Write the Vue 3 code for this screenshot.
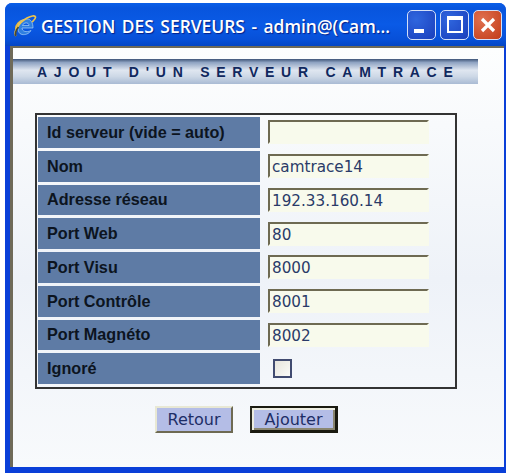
<template>
  <div class="window">
    <div class="titlebar">
      <svg class="ieIcon" width="24" height="24" viewBox="0 0 24 24">
        <path d="M3 15 A9 7 -25 0 1 11 6" fill="none" stroke="#e8b93c" stroke-width="2"/>
        <path d="M5 14 C5 8 10 5 14 5 C18 5 20 9 20 14 H9 C9 17 13 19 18 16.5 C16 20 12 21 9 20.5 C6 20 5 17 5 14 Z M9.5 11.5 H16 C16 8 10.5 8 9.5 11.5 Z" fill="#2f7fe0" fill-rule="evenodd" stroke="#bfe0fb" stroke-width="0.6"/>
        <path d="M3 22 C0 19 5 9 14 4 C18 2 22 1 22.5 3 C23 5 20 7 19 8" fill="none" stroke="#eec44c" stroke-width="1.7"/>
        <path d="M3 22 C1.5 20.5 3 16 5.5 13" fill="none" stroke="#4a4a30" stroke-width="1.7"/>
      </svg>
      <span class="titleText">GESTION DES SERVEURS - admin@(Cam...</span>
      <div class="winButtons">
        <div class="winBtn"><span class="minGlyph"></span></div>
        <div class="winBtn"><span class="maxGlyph"></span></div>
        <div class="winBtn closeBtn">
          <svg width="18" height="18" viewBox="0 0 18 18">
            <path d="M3 3 L15 15 M15 3 L3 15" stroke="#fff" stroke-width="3.2"/>
          </svg>
        </div>
      </div>
    </div>

    <div class="content">
      <h1 class="banner">AJOUT D'UN SERVEUR CAMTRACE</h1>

      <form class="serverForm" @submit.prevent>
        <div class="formTable">
          <template v-for="field in fields" :key="field.label">
            <label class="cellLabel">{{ field.label }}</label>
            <div class="cellValue">
              <input v-if="field.type === 'text'" class="textInput" type="text" :value="field.value" />
              <span v-else class="checkBox"></span>
            </div>
          </template>
        </div>

        <div class="actions">
          <button type="button" class="btn btnBack">Retour</button>
          <button type="submit" class="btn btnAdd">Ajouter</button>
        </div>
      </form>
    </div>
  </div>
</template>

<script setup>
const fields = [
  { label: 'Id serveur (vide = auto)', type: 'text', value: '' },
  { label: 'Nom', type: 'text', value: 'camtrace14' },
  { label: 'Adresse réseau', type: 'text', value: '192.33.160.14' },
  { label: 'Port Web', type: 'text', value: '80' },
  { label: 'Port Visu', type: 'text', value: '8000' },
  { label: 'Port Contrôle', type: 'text', value: '8001' },
  { label: 'Port Magnéto', type: 'text', value: '8002' },
  { label: 'Ignoré', type: 'check' }
]
</script>

<style>
html, body {
  margin: 0;
  background: #ffffff;
}
</style>

<style scoped>
.window {
  box-sizing: border-box;
  width: 501px;
  height: 470px;
  margin: 3px 0 0 5px;
  display: flex;
  flex-direction: column;
  border-radius: 7px 7px 0 0;
  background: #0a3fd8;
  overflow: hidden;
}

.titlebar {
  height: 43px;
  flex: none;
  display: flex;
  align-items: center;
  padding: 0 4px 0 8px;
  box-sizing: border-box;
  background: linear-gradient(to bottom, #0a5fe8 0%, #0855dd 12%, #0a5ae6 50%, #0750d8 85%, #0546c4 100%);
}

.ieIcon {
  flex: none;
  margin: 2px 4px 0 0;
}

.titleText {
  flex: 1;
  margin-top: 3px;
  font-family: "Open Sans", sans-serif;
  font-size: 17.4px;
  font-weight: 600;
  word-spacing: 2px;
  color: #ffffff;
  text-shadow: 1px 1px 1px #04208a;
  white-space: nowrap;
}

.winButtons {
  display: flex;
  gap: 4px;
}

.winBtn {
  box-sizing: border-box;
  width: 29px;
  height: 30px;
  border: 1px solid #d4e0f8;
  border-radius: 5px;
  background: radial-gradient(circle at 30% 30%, #2f66de, #1a3fbc);
  display: flex;
  align-items: center;
  justify-content: center;
  position: relative;
}

.minGlyph {
  position: absolute;
  left: 6px;
  bottom: 6px;
  width: 10px;
  height: 4px;
  background: #ffffff;
}

.maxGlyph {
  box-sizing: border-box;
  width: 16px;
  height: 17px;
  border: 2px solid #ffffff;
  border-top-width: 4px;
}

.closeBtn {
  background: radial-gradient(circle at 30% 30%, #e07050, #c23c18);
}

.content {
  flex: 1;
  margin: 0 2px 6px 5px;
  border-left: 3px solid #6f6a58;
  border-top: 2px solid #6f6a58;
  background: linear-gradient(to bottom, #fdfefe 0%, #eef2f8 55%, #f8fafc 100%);
  padding-top: 11px;
}

.banner {
  box-sizing: border-box;
  width: 465px;
  height: 25px;
  margin: 0;
  padding-left: 24px;
  font-family: "Liberation Sans", Arial, sans-serif;
  font-size: 14px;
  font-weight: bold;
  line-height: 26px;
  letter-spacing: 6.75px;
  color: #10285e;
  white-space: nowrap;
  background: linear-gradient(to bottom, #3f5578 0%, #8fa3c2 14%, #dfe6f0 45%, #cdd8e6 70%, #a9bbd4 100%);
}

.serverForm {
  padding: 29px 0 0 22px;
}

.formTable {
  box-sizing: border-box;
  width: 422px;
  height: 276px;
  padding: 2px 0 3px 1px;
  border: 2px solid #333333;
  display: grid;
  grid-template-columns: 222px 1fr;
  grid-auto-rows: 1fr;
  row-gap: 3px;
}

.cellLabel {
  display: flex;
  align-items: center;
  padding-left: 9px;
  background: #5e7ba5;
  font-family: "Liberation Sans", Arial, sans-serif;
  font-size: 16.2px;
  font-weight: bold;
  color: #0c1420;
  white-space: nowrap;
}

.cellValue {
  display: flex;
  align-items: center;
  padding-left: 8px;
}

.textInput {
  box-sizing: border-box;
  width: 161px;
  height: 24px;
  padding: 2px 0 0 2px;
  border: 2px solid #f8faec;
  border-top-color: #6e6a52;
  border-left-color: #6e6a52;
  background: #f8faec;
  font-family: "DejaVu Sans", Verdana, sans-serif;
  font-size: 15.2px;
  color: #2a3a68;
  outline: none;
}

.checkBox {
  box-sizing: border-box;
  width: 19px;
  height: 19px;
  margin-left: 5px;
  border: 2px solid #414b70;
  background: linear-gradient(135deg, #e6e4dc, #fbfbf8);
}

.actions {
  display: flex;
  gap: 17px;
  padding: 17px 0 0 120px;
}

.btn {
  box-sizing: border-box;
  height: 27px;
  padding: 0;
  background: #b4bde6;
  font-family: "DejaVu Sans", Verdana, sans-serif;
  font-size: 16px;
  color: #1e2e66;
  cursor: pointer;
}

.btnBack {
  width: 78px;
  border: 2px solid #e8e8d4;
  border-right-color: #6e6a52;
  border-bottom-color: #6e6a52;
}

.btnAdd {
  width: 88px;
  border: 2px solid #1a1a10;
  border-left-color: #2a2a20;
  border-right-width: 3px;
  border-bottom-width: 3px;
  box-shadow: inset 2px 2px 0 #ecece0, inset -2px -2px 0 #8a8670;
}
</style>
